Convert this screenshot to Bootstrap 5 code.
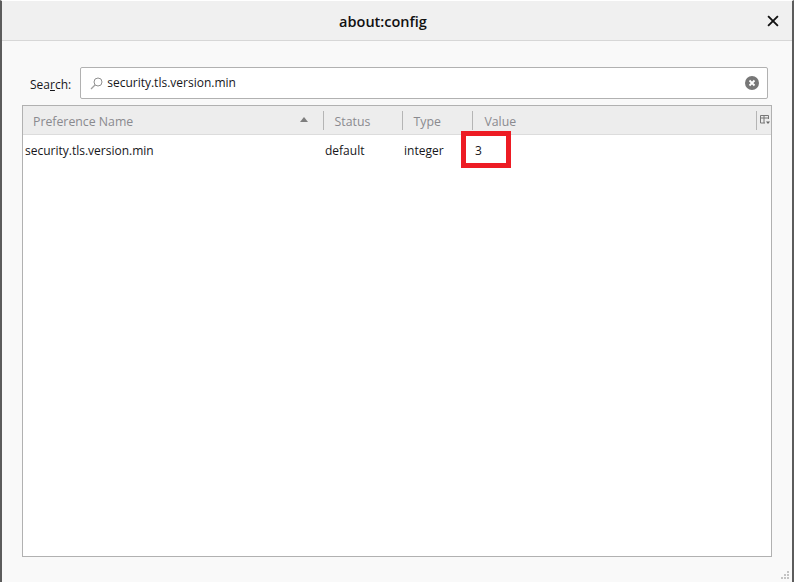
<!DOCTYPE html>
<html lang="en">
<head>
<meta charset="utf-8">
<title>about:config</title>
<link href="https://cdn.jsdelivr.net/npm/bootstrap@5.3.0/dist/css/bootstrap.min.css" rel="stylesheet">
<style>
html,body{height:100%;margin:0;}
body{background:#f9f9f9;font-family:"Open Sans","Noto Sans",sans-serif;font-size:12px;color:#16161a;overflow:hidden;}
.win{height:582px;width:794px;border-left:2px solid #5c5c5c;border-right:2px solid #5c5c5c;border-top:1px solid #fff;position:relative;background:#f9f9f9;}
.win-head{height:40px;background:#f0f0f0;border-bottom:1px solid #d7d7d7;position:relative;padding:2px 28px 0 0;}
.win-title{font-size:14.5px;font-weight:600;color:#111;}
.win-close{position:absolute;right:13px;top:14px;width:12px;height:12px;display:block;}
.search-row{padding:26px 24px 0 28px;gap:9px;height:64px;}
.search-label{color:#16161a;}
.search-box{height:32px;background:#fff;border:1px solid #b1b1b1;border-radius:2px;padding:0 8px 0 9px;gap:4px;}
.pref-tree{margin:0 20px;height:452px;background:#fff;border:1px solid #b1b1b1;position:relative;}
.pref-head{height:29px;background:#ededed;border-bottom:1px solid #dcdcdc;color:#8a8a8f;font-size:12.3px;}
.hcell{height:100%;display:flex;align-items:center;position:relative;padding:5px 0 0 10px;}
.hcell+.hcell{padding-left:12px;}
.hcell+.hcell::before{content:"";position:absolute;left:0;top:5px;height:19px;width:1px;background:#b5b5b5;}
.c1{width:300px;}
.c2{width:79px;}
.c3{width:71px;}
.c4{width:284px;}
.hcell.c5{width:15px;padding:0;}
.pref-row{height:29px;padding-top:2px;color:#16161a;font-size:12px;}
.pref-row>div{padding-left:2px;}
.sort-mark{position:absolute;right:15px;top:11px;width:0;height:0;border-left:4.5px solid transparent;border-right:4.5px solid transparent;border-bottom:5px solid #7e7e7e;}
.red-mark{position:absolute;left:459px;top:130px;width:50px;height:37px;border:5px solid #ed1c24;pointer-events:none;}
.grip{position:absolute;right:1px;bottom:1px;}
</style>
</head>
<body>
<div class="win d-flex flex-column">
  <div class="win-head d-flex align-items-center justify-content-center">
    <span class="win-title">about:config</span>
    <svg class="win-close" viewBox="0 0 11 11"><path d="M1 1 10 10M10 1 1 10" stroke="#111" stroke-width="1.7" fill="none"/></svg>
  </div>
  <div class="search-row d-flex align-items-start">
    <label class="search-label mt-2 pt-1 lh-1">Sea<u>r</u>ch:</label>
    <div class="search-box d-flex align-items-center flex-grow-1">
      <svg width="13" height="13" viewBox="0 0 13 13" class="flex-shrink-0"><circle cx="8" cy="5" r="4" fill="none" stroke="#8f8f8f" stroke-width="1"/><path d="M5 8 1 12" stroke="#a0a0a0" stroke-width="1.2" fill="none"/></svg>
      <span class="flex-grow-1">security.tls.version.min</span>
      <svg width="14" height="14" viewBox="0 0 14 14" class="flex-shrink-0"><circle cx="7" cy="7" r="7" fill="#777"/><path d="M4.5 4.5 9.5 9.5M9.5 4.5 4.5 9.5" stroke="#fff" stroke-width="1.8"/></svg>
    </div>
  </div>
  <div class="pref-tree">
    <div class="pref-head d-flex">
      <div class="hcell c1">Preference Name<span class="sort-mark"></span></div>
      <div class="hcell c2">Status</div>
      <div class="hcell c3">Type</div>
      <div class="hcell c4">Value</div>
      <div class="hcell c5">
        <svg width="10" height="10" viewBox="0 0 10 10" class="ms-1"><path d="M.5 8V.5h8V4M.5 3h8M4 .5V8M.5 8H5" fill="none" stroke="#777" stroke-width="1"/><path d="M6 6.5h4L8 9z" fill="#666"/></svg>
      </div>
    </div>
    <div class="pref-row d-flex align-items-center">
      <div class="c1">security.tls.version.min</div>
      <div class="c2">default</div>
      <div class="c3">integer</div>
      <div class="c4">3</div>
    </div>
  </div>
  <div class="red-mark"></div>
  <svg class="grip" width="11" height="11" viewBox="0 0 11 11" fill="#c4c4c4"><rect x="7" y="1" width="2" height="2"/><rect x="4" y="4" width="2" height="2"/><rect x="7" y="4" width="2" height="2"/><rect x="1" y="7" width="2" height="2"/><rect x="4" y="7" width="2" height="2"/><rect x="7" y="7" width="2" height="2"/></svg>
</div>
<script src="https://cdn.jsdelivr.net/npm/bootstrap@5.3.0/dist/js/bootstrap.bundle.min.js"></script>
</body>
</html>
